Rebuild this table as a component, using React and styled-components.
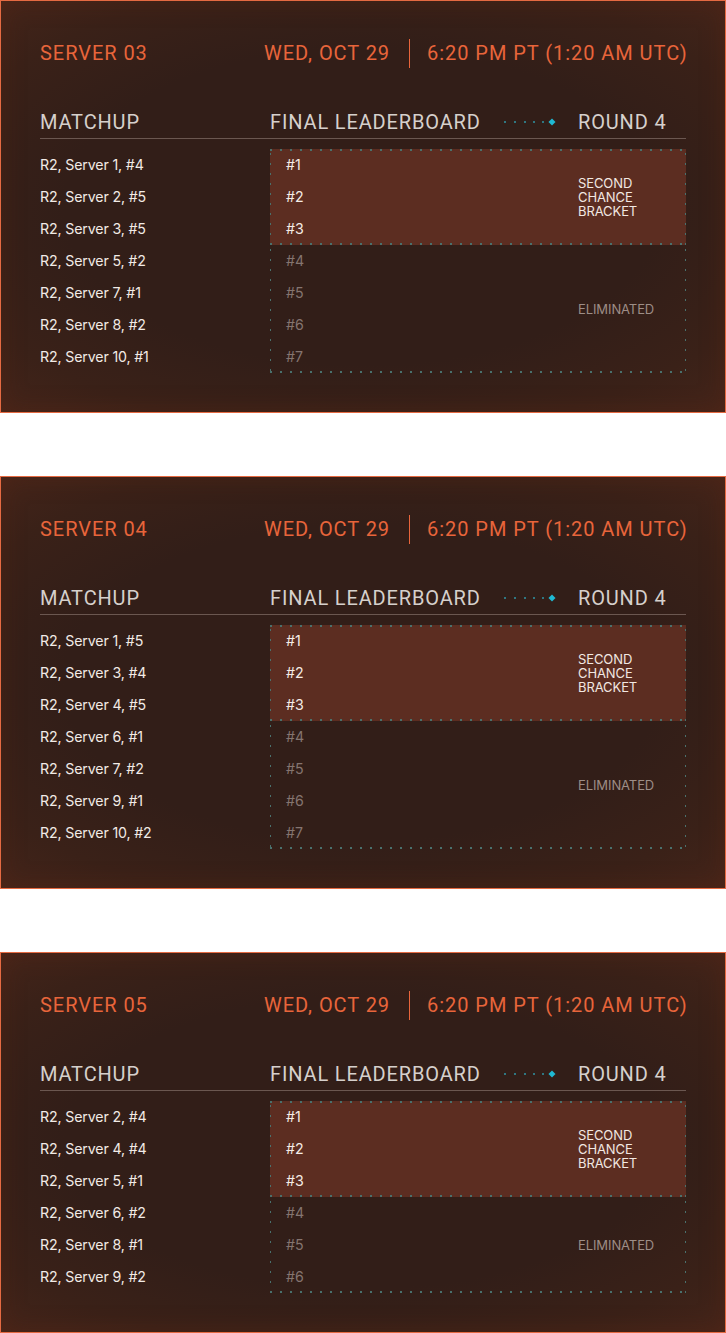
import styled, { createGlobalStyle } from "styled-components"

const Global = createGlobalStyle`
  html, body { margin: 0; padding: 0; background: #ffffff; }
  body { font-family: Inter, "Liberation Sans", Arial, sans-serif; }
`

const servers = [
  { name: "SERVER 03", matchups: ["R2, Server 1, #4", "R2, Server 2, #5", "R2, Server 3, #5", "R2, Server 5, #2", "R2, Server 7, #1", "R2, Server 8, #2", "R2, Server 10, #1"] },
  { name: "SERVER 04", matchups: ["R2, Server 1, #5", "R2, Server 3, #4", "R2, Server 4, #5", "R2, Server 6, #1", "R2, Server 7, #2", "R2, Server 9, #1", "R2, Server 10, #2"] },
  { name: "SERVER 05", matchups: ["R2, Server 2, #4", "R2, Server 4, #4", "R2, Server 5, #1", "R2, Server 6, #2", "R2, Server 8, #1", "R2, Server 9, #2"] },
]

const dot = "#4a716d"

const Page = styled.div`
  display: flex;
  flex-direction: column;
  gap: 63px;
`

const Card = styled.section`
  border: 1px solid #e56a42;
  padding: 36px 39px 39px 39px;
  background: radial-gradient(ellipse 75% 70% at 50% 50%, #321e18 55%, #3a2118 80%, #45251a 100%);
  box-shadow: inset 0 0 24px rgba(90, 38, 20, 0.45);
`

const Header = styled.header`
  display: flex;
  align-items: center;
  height: 32px;
  white-space: nowrap;
  font-family: Roboto, "DejaVu Sans", sans-serif;
  font-size: 20px;
  letter-spacing: 0.95px;
  color: #e8653b;
`

const Title = styled.div`
  width: 224px;
  flex-shrink: 0;
`

const Divider = styled.span`
  flex-shrink: 0;
  width: 1px;
  height: 29px;
  background: #e8653b;
  margin: 0 17px 0 19px;
`

const ColHeads = styled.div`
  display: grid;
  grid-template-columns: 230px 1fr 108px;
  margin-top: 41px;
  padding-bottom: 4px;
  border-bottom: 1px solid #6b5750;
  white-space: nowrap;
  font-family: Roboto, "DejaVu Sans", sans-serif;
  font-size: 20px;
  line-height: 24px;
  letter-spacing: 0.85px;
  color: #d6d0cc;
`

const BoardHead = styled.div`
  display: flex;
  align-items: center;
  justify-content: space-between;
  padding-right: 20px;
`

const Body = styled.div`
  display: grid;
  grid-template-columns: 230px 1fr;
  margin-top: 10px;
`

const Matchup = styled.div`
  height: 32px;
  line-height: 32px;
  font-size: 14.2px;
  color: #f2ebe6;
  letter-spacing: -0.15px;
`

const Bracket = styled.div`
  display: grid;
  grid-template-columns: 1fr 108px;
  align-items: center;
  background-color: ${p => p.$fill || "transparent"};
  background-image:
    ${p => p.$top ? `repeating-linear-gradient(to right, ${dot} 0 2px, transparent 2px 10px),` : ""}
    repeating-linear-gradient(to right, ${dot} 0 2px, transparent 2px 10px),
    repeating-linear-gradient(to bottom, transparent 0 4px, ${dot} 4px 6px, transparent 6px 10px),
    repeating-linear-gradient(to bottom, transparent 0 4px, ${dot} 4px 6px, transparent 6px 10px);
  background-size:
    ${p => p.$top ? "100% 2px," : ""}
    100% 2px, 1px 100%, 1px 100%;
  background-position:
    ${p => p.$top ? "0 0," : ""}
    0 100%, 0 0, 100% 0;
  background-repeat: no-repeat;
`

const Ranks = styled.div`
  padding-left: 16px;
`

const Rank = styled.div`
  height: 32px;
  line-height: 32px;
  font-size: 14.2px;
  color: ${p => p.$out ? "#857570" : "#f5ece6"};
`

const Label = styled.div`
  font-size: 13px;
  line-height: 14px;
  letter-spacing: -0.1px;
  color: ${p => p.$out ? "#9d8d86" : "#f2e8e2"};
`

function Connector() {
  return (
    <svg width="54" height="8" viewBox="0 0 54 8">
      {[0, 10, 20, 29, 38].map(x => (
        <rect key={x} x={x} y="3" width="2" height="2" fill="#2f7781" />
      ))}
      <rect x="45.5" y="1.5" width="5" height="5" fill="#1fb9d2" transform="rotate(45 48 4)" />
    </svg>
  )
}

function ServerCard({ server }) {
  const ranks = server.matchups.map((_, i) => `#${i + 1}`)
  return (
    <Card>
      <Header>
        <Title>{server.name}</Title>
        <span>WED, OCT 29</span>
        <Divider />
        <span>6:20 PM PT (1:20 AM UTC)</span>
      </Header>
      <ColHeads>
        <div>MATCHUP</div>
        <BoardHead>
          <span>FINAL LEADERBOARD</span>
          <Connector />
        </BoardHead>
        <div>ROUND 4</div>
      </ColHeads>
      <Body>
        <div>
          {server.matchups.map(m => <Matchup key={m}>{m}</Matchup>)}
        </div>
        <div>
          <Bracket $top $fill="#5c2d21">
            <Ranks>
              {ranks.slice(0, 3).map(r => <Rank key={r}>{r}</Rank>)}
            </Ranks>
            <Label>SECOND<br />CHANCE<br />BRACKET</Label>
          </Bracket>
          <Bracket>
            <Ranks>
              {ranks.slice(3).map(r => <Rank key={r} $out>{r}</Rank>)}
            </Ranks>
            <Label $out>ELIMINATED</Label>
          </Bracket>
        </div>
      </Body>
    </Card>
  )
}

export default function App() {
  return (
    <>
      <Global />
      <Page>
        {servers.map(s => <ServerCard key={s.name} server={s} />)}
      </Page>
    </>
  )
}
